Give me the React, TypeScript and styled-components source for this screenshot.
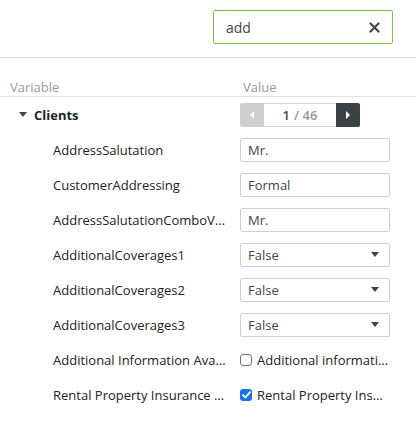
import React from "react";
import styled, { createGlobalStyle } from "styled-components";

const Global = createGlobalStyle`
  html, body { margin: 0; padding: 0; background: #fff; }
  body { font-family: "Open Sans", "Noto Sans", sans-serif; color: #333; }
  * { box-sizing: border-box; }
`;

const Page = styled.div`
  width: 416px;
  height: 436px;
  background: #fff;
  display: flex;
  flex-direction: column;
`;

const TopBar = styled.div`
  height: 58px;
  border-bottom: 1px solid #ddd;
  display: flex;
  justify-content: flex-end;
  align-items: flex-start;
  padding: 10px 23px 0 0;
`;

const SearchBox = styled.div`
  width: 180px;
  height: 34px;
  border: 1px solid #7dc242;
  border-radius: 2px;
  display: flex;
  align-items: center;
  padding: 0 12px 0 12px;
  gap: 8px;
`;

const SearchText = styled.span`
  flex: 1;
  font-size: 14px;
  color: #444;
`;

const ClearIcon = styled.svg`
  width: 11px;
  height: 11px;
  flex: none;
`;

const HeaderRow = styled.div`
  height: 39px;
  border-bottom: 1px solid #e3e3e3;
  display: grid;
  grid-template-columns: 233px 1fr;
  align-items: end;
  padding: 0 0 0 10px;
`;

const HeaderCell = styled.span`
  font-size: 13px;
  color: #9a9a9a;
  line-height: 18px;
`;

const Row = styled.div`
  height: 35px;
  display: grid;
  grid-template-columns: 240px 150px;
  align-items: center;
`;

const GroupLabel = styled.div`
  display: flex;
  align-items: center;
  gap: 7px;
  padding-left: 19px;
  font-size: 13px;
  font-weight: 700;
  color: #222;
`;

const Caret = styled.span`
  width: 0;
  height: 0;
  border-left: 4px solid transparent;
  border-right: 4px solid transparent;
  border-top: 5px solid #444;
`;

const Label = styled.div`
  padding-left: 53px;
  padding-right: 12px;
  font-size: 13px;
  color: #222;
  white-space: nowrap;
  overflow: hidden;
  text-overflow: ellipsis;
`;

const Pager = styled.div`
  display: flex;
  height: 24px;
  width: 120px;
`;

const PagerBtn = styled.div<{ $dark?: boolean }>`
  width: 24px;
  height: 24px;
  display: flex;
  align-items: center;
  justify-content: center;
  background: ${(p) => (p.$dark ? "#3b4246" : "#cfcfcf")};
  border-radius: ${(p) => (p.$dark ? "0 2px 2px 0" : "2px 0 0 2px")};
`;

const Tri = styled.span<{ $dir: "left" | "right" }>`
  width: 0;
  height: 0;
  border-top: 4px solid transparent;
  border-bottom: 4px solid transparent;
  ${(p) =>
    p.$dir === "left"
      ? "border-right: 4px solid #fff;"
      : "border-left: 4px solid #fff;"}
`;

const PagerCount = styled.div`
  flex: 1;
  border: 1px solid #d3d3d3;
  border-left: none;
  border-right: none;
  display: flex;
  align-items: center;
  justify-content: center;
  font-size: 13px;
  font-weight: 600;
  color: #444;
  gap: 4px;
`;

const Muted = styled.span`
  color: #999;
`;

const Field = styled.div`
  width: 150px;
  height: 24px;
  border: 1px solid #cfcfcf;
  border-radius: 2px;
  display: flex;
  align-items: center;
  padding: 0 8px 0 7px;
  font-size: 13px;
  color: #444;
`;

const FieldText = styled.span`
  flex: 1;
`;

const SelectArrow = styled.span`
  width: 0;
  height: 0;
  border-left: 4px solid transparent;
  border-right: 4px solid transparent;
  border-top: 5px solid #444;
  margin-right: 2px;
`;

const CheckWrap = styled.div`
  display: flex;
  align-items: center;
  gap: 5px;
  font-size: 13px;
  color: #222;
  width: 150px;
  white-space: nowrap;
  overflow: hidden;
`;

const CheckText = styled.span`
  overflow: hidden;
  text-overflow: ellipsis;
`;

const Box = styled.span<{ $checked?: boolean }>`
  flex: none;
  width: 12px;
  height: 12px;
  border-radius: 3px;
  border: ${(p) => (p.$checked ? "none" : "1px solid #767676")};
  background: ${(p) => (p.$checked ? "#1a73e8" : "#fff")};
  display: flex;
  align-items: center;
  justify-content: center;
`;

type Item =
  | { label: string; kind: "text"; value: string }
  | { label: string; kind: "select"; value: string }
  | { label: string; kind: "check"; value: string; checked: boolean };

const items: Item[] = [
  { label: "AddressSalutation", kind: "text", value: "Mr." },
  { label: "CustomerAddressing", kind: "text", value: "Formal" },
  { label: "AddressSalutationComboValue", kind: "text", value: "Mr." },
  { label: "AdditionalCoverages1", kind: "select", value: "False" },
  { label: "AdditionalCoverages2", kind: "select", value: "False" },
  { label: "AdditionalCoverages3", kind: "select", value: "False" },
  {
    label: "Additional Information Available",
    kind: "check",
    value: "Additional information available",
    checked: false,
  },
  {
    label: "Rental Property Insurance Required",
    kind: "check",
    value: "Rental Property Insurance",
    checked: true,
  },
];

function Value({ item }: { item: Item }) {
  if (item.kind === "text")
    return (
      <Field>
        <FieldText>{item.value}</FieldText>
      </Field>
    );
  if (item.kind === "select")
    return (
      <Field>
        <FieldText>{item.value}</FieldText>
        <SelectArrow />
      </Field>
    );
  return (
    <CheckWrap>
      <Box $checked={item.checked}>
        {item.checked && (
          <svg width="9" height="8" viewBox="0 0 9 8">
            <path d="M1 4.2 L3.4 6.5 L8 1.2" fill="none" stroke="#fff" strokeWidth="1.8" strokeLinecap="round" strokeLinejoin="round" />
          </svg>
        )}
      </Box>
      <CheckText>{item.value}</CheckText>
    </CheckWrap>
  );
}

export default function App() {
  return (
    <Page>
      <Global />
      <TopBar>
        <SearchBox>
          <SearchText>add</SearchText>
          <ClearIcon viewBox="0 0 11 11">
            <path d="M1.5 1.5 L9.5 9.5 M9.5 1.5 L1.5 9.5" stroke="#3f4548" strokeWidth="2.2" strokeLinecap="round" />
          </ClearIcon>
        </SearchBox>
      </TopBar>
      <HeaderRow>
        <HeaderCell>Variable</HeaderCell>
        <HeaderCell>Value</HeaderCell>
      </HeaderRow>
      <Row>
        <GroupLabel>
          <Caret />
          Clients
        </GroupLabel>
        <Pager>
          <PagerBtn>
            <Tri $dir="left" />
          </PagerBtn>
          <PagerCount>
            1 <Muted>/ 46</Muted>
          </PagerCount>
          <PagerBtn $dark>
            <Tri $dir="right" />
          </PagerBtn>
        </Pager>
      </Row>
      {items.map((it) => (
        <Row key={it.label}>
          <Label>{it.label}</Label>
          <Value item={it} />
        </Row>
      ))}
    </Page>
  );
}
